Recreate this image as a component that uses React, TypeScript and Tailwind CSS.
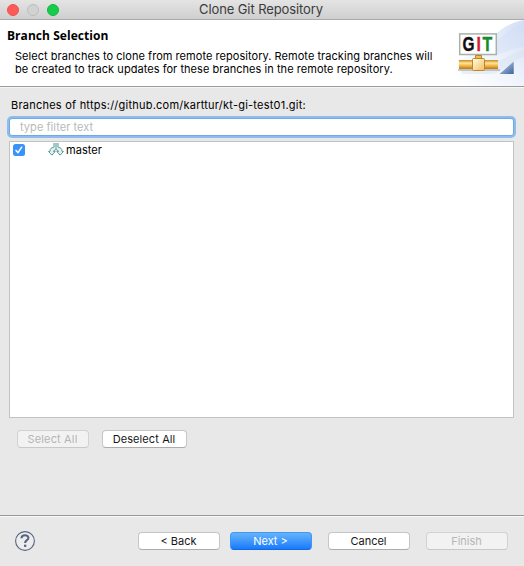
import type { ReactNode } from "react";

function TitleBar() {
  return (
    <header className="grid h-5 shrink-0 grid-cols-[62px_1fr_64px] items-center border-b border-[#aaaaaa] bg-linear-to-b from-[#e4e4e4] to-[#cfcfcf]">
      <div className="flex gap-2 pl-[7px]">
        <span className="size-3 rounded-full border border-[#ee5350] bg-[#fc5b57]" />
        <span className="size-3 rounded-full border border-[#bdbdbd] bg-[#d2d2d2]" />
        <span className="size-3 rounded-full border border-[#12b83c] bg-[#17cc4b]" />
      </div>
      <h1 className="text-center text-[13px] leading-[19px] tracking-[-0.1px] whitespace-nowrap text-[#3b3b3b]">
        Clone Git Repository
      </h1>
    </header>
  );
}

function GitBanner() {
  return (
    <svg width="84" height="66" viewBox="440 20 84 66" className="shrink-0" aria-label="Git repository">
      <defs>
        <linearGradient id="sky" x1="0" y1="1" x2="1" y2="0">
          <stop offset="0.1" stopColor="#ffffff" />
          <stop offset="0.5" stopColor="#eff4fc" />
          <stop offset="1" stopColor="#d3dff5" />
        </linearGradient>
        <linearGradient id="pipe" x1="0" y1="0" x2="0" y2="1">
          <stop offset="0" stopColor="#c98a1e" />
          <stop offset="0.35" stopColor="#ffe59a" />
          <stop offset="0.65" stopColor="#efb542" />
          <stop offset="1" stopColor="#b97815" />
        </linearGradient>
        <linearGradient id="hub" x1="0" y1="0" x2="1" y2="1">
          <stop offset="0" stopColor="#fffdf0" />
          <stop offset="1" stopColor="#f3bd59" />
        </linearGradient>
        <linearGradient id="corner" x1="0" y1="0" x2="1" y2="1">
          <stop offset="0.3" stopColor="#9db7d9" />
          <stop offset="1" stopColor="#3c6299" />
        </linearGradient>
      </defs>
      <path d="M449 86C453 68 462 56 478 48C493 39 499 25 524 20V86Z" fill="url(#sky)" />
      <path d="M490 45C501 41 507 27 524 23V47C511 48 500 56 487 55Z" fill="#c9d8f4" opacity="0.3" />
      <path d="M458 60H500L524 49V57C510 60 506 72 491 74H462Z" fill="#d7dfeb" opacity="0.45" />
      <rect x="459.7" y="33.9" width="36.6" height="20.6" fill="#fff" stroke="#a9b1ad" strokeWidth="1.5" />
      <g fontFamily="Liberation Sans, Arial, sans-serif" fontWeight="700" fontSize="20" strokeWidth="0.4">
        <text transform="translate(462.4 51.2) scale(.77 1)" fill="#101010" stroke="#101010">G</text>
        <text transform="translate(476.6 51.2) scale(.79 1)" fill="#d31f38" stroke="#d31f38">I</text>
        <text transform="translate(482.4 51.2) scale(.8 1)" fill="#178a2d" stroke="#178a2d">T</text>
      </g>
      <path d="M475.5 55.5H481.5V59H475.5Z" fill="#f1bd4d" stroke="#bf8725" />
      <path d="M458 70H500" stroke="#a6a8aa" strokeWidth="2" opacity="0.6" />
      <rect x="459" y="60" width="39" height="9" fill="url(#pipe)" />
      <rect x="472.5" y="58.5" width="12" height="12" rx="1" fill="url(#hub)" stroke="#c38524" />
      <path d="M499.5 74L513.7 61.5V74Z" fill="url(#corner)" />
    </svg>
  );
}

function BranchIcon() {
  return (
    <svg width="16" height="14" viewBox="0 0 16 14" className="shrink-0" fill="#e3f3f1" stroke="#5f9a98" strokeWidth="1">
      <path d="M6 0V4L3.2 5.2Q2 6 2 8.5H.6L3.9 12.2L7.2 8.5H5.6V7.8L8 6.4L10.4 7.8V8.5H8.8L12.1 12.2L15.4 8.5H14Q14 6 12.8 5.2L10 4V0" />
      <path d="M8 0V6" />
    </svg>
  );
}

const tones = {
  normal: "border-[#c6c6c6] border-b-[#acacac] bg-white text-[#161616]",
  primary: "border-[#3f98f5] border-b-[#1469e0] bg-linear-to-b from-[#64b3fb] to-[#167afb] text-white",
  disabled: "border-[#d2d2d2] border-b-[#c8c8c8] bg-[#f2f2f2] text-[#b5b5b5]",
};

function Button({ tone = "normal", className, children }: { tone?: keyof typeof tones; className: string; children: ReactNode }) {
  return (
    <button
      disabled={tone === "disabled"}
      className={`flex h-[18px] items-center justify-center rounded-[4px] border pr-px text-[11px] leading-none whitespace-nowrap ${tones[tone]} ${className}`}
    >
      {children}
    </button>
  );
}

export default function App() {
  return (
    <div className="flex h-[566px] w-[524px] flex-col overflow-hidden bg-[#e8e8e8] font-[Inter,sans-serif] text-[11px] text-black">
      <TitleBar />

      <section className="flex h-[67px] shrink-0 justify-between border-b border-[#9b9b9b] bg-white">
        <div className="w-[433px] pl-[7px]">
          <h2 className="pt-[7px] font-['Open_Sans',sans-serif] text-[12px] leading-[18px] font-bold tracking-[0.05px] whitespace-nowrap">
            Branch Selection
          </h2>
          <p className="pt-[5px] pl-2 leading-[13px] tracking-[0.045px] whitespace-nowrap">
            Select branches to clone from remote repository. Remote tracking branches will
            <br />
            be created to track updates for these branches in the remote repository.
          </p>
        </div>
        <GitBanner />
      </section>

      <main className="flex flex-1 flex-col border-t border-[#f6f6f6] px-[9px] pt-[9px]">
        <label htmlFor="filter" className="pl-0.5 leading-4 tracking-[0.23px]">
          Branches of https://github.com/karttur/kt-gi-test01.git:
        </label>
        <input
          id="filter"
          placeholder="type filter text"
          className="mt-[5px] h-[18px] w-[505px] rounded-[3px] border border-[#72a9e4] bg-white px-[10px] tracking-[0.05px] ring-2 ring-[#8fbcee] outline-none placeholder:text-[#b9b9b9]"
        />
        <div className="mt-[5px] h-[277px] w-[505px] border border-[#c3c3c3] bg-white">
          <div className="flex h-4 items-center pl-[3px]">
            <span className="flex size-3 items-center justify-center rounded-[2.5px] bg-[#3b93fa]">
              <svg width="10" height="10" viewBox="0 0 10 10" fill="none" stroke="#fff" strokeWidth="1.5" strokeLinecap="round">
                <path d="M2 5.4L4 7.6L7.7 2.2" />
              </svg>
            </span>
            <span className="ml-[23px] flex items-center gap-[2px]">
              <BranchIcon />
              <span className="tracking-[0.05px]">master</span>
            </span>
          </div>
        </div>
        <div className="mt-3 flex gap-[13px] pl-2">
          <Button tone="disabled" className="w-[72px] tracking-[0.15px]">Select All</Button>
          <Button className="w-[85px] tracking-[0.1px]">Deselect All</Button>
        </div>
      </main>

      <footer className="flex h-[51px] shrink-0 items-center border-t border-[#999999] pl-[15px] shadow-[inset_0_1px_0_#f8f8f8]">
        <svg width="20" height="20" viewBox="0 0 20 20" fill="none" stroke="#56657f" aria-label="Help">
          <circle cx="10" cy="10" r="9.4" strokeWidth="1.1" fill="#ededed" />
          <path d="M6.5 7.2C6.6 3.3 13.4 3.3 13.4 6.9C13.4 9.2 10.1 9.2 10.1 12" strokeWidth="2.1" />
          <path d="M9 14.8H11.3" strokeWidth="2.2" />
        </svg>
        <div className="ml-[103px] flex gap-[14px]">
          <Button className="w-[82px]">&lt; Back</Button>
          <Button tone="primary" className="-ml-[4px] w-[82px]">Next &gt;</Button>
          <Button className="ml-[2px] w-[82px]">Cancel</Button>
          <Button tone="disabled" className="ml-[2px] w-[82px]">Finish</Button>
        </div>
      </footer>
    </div>
  );
}
